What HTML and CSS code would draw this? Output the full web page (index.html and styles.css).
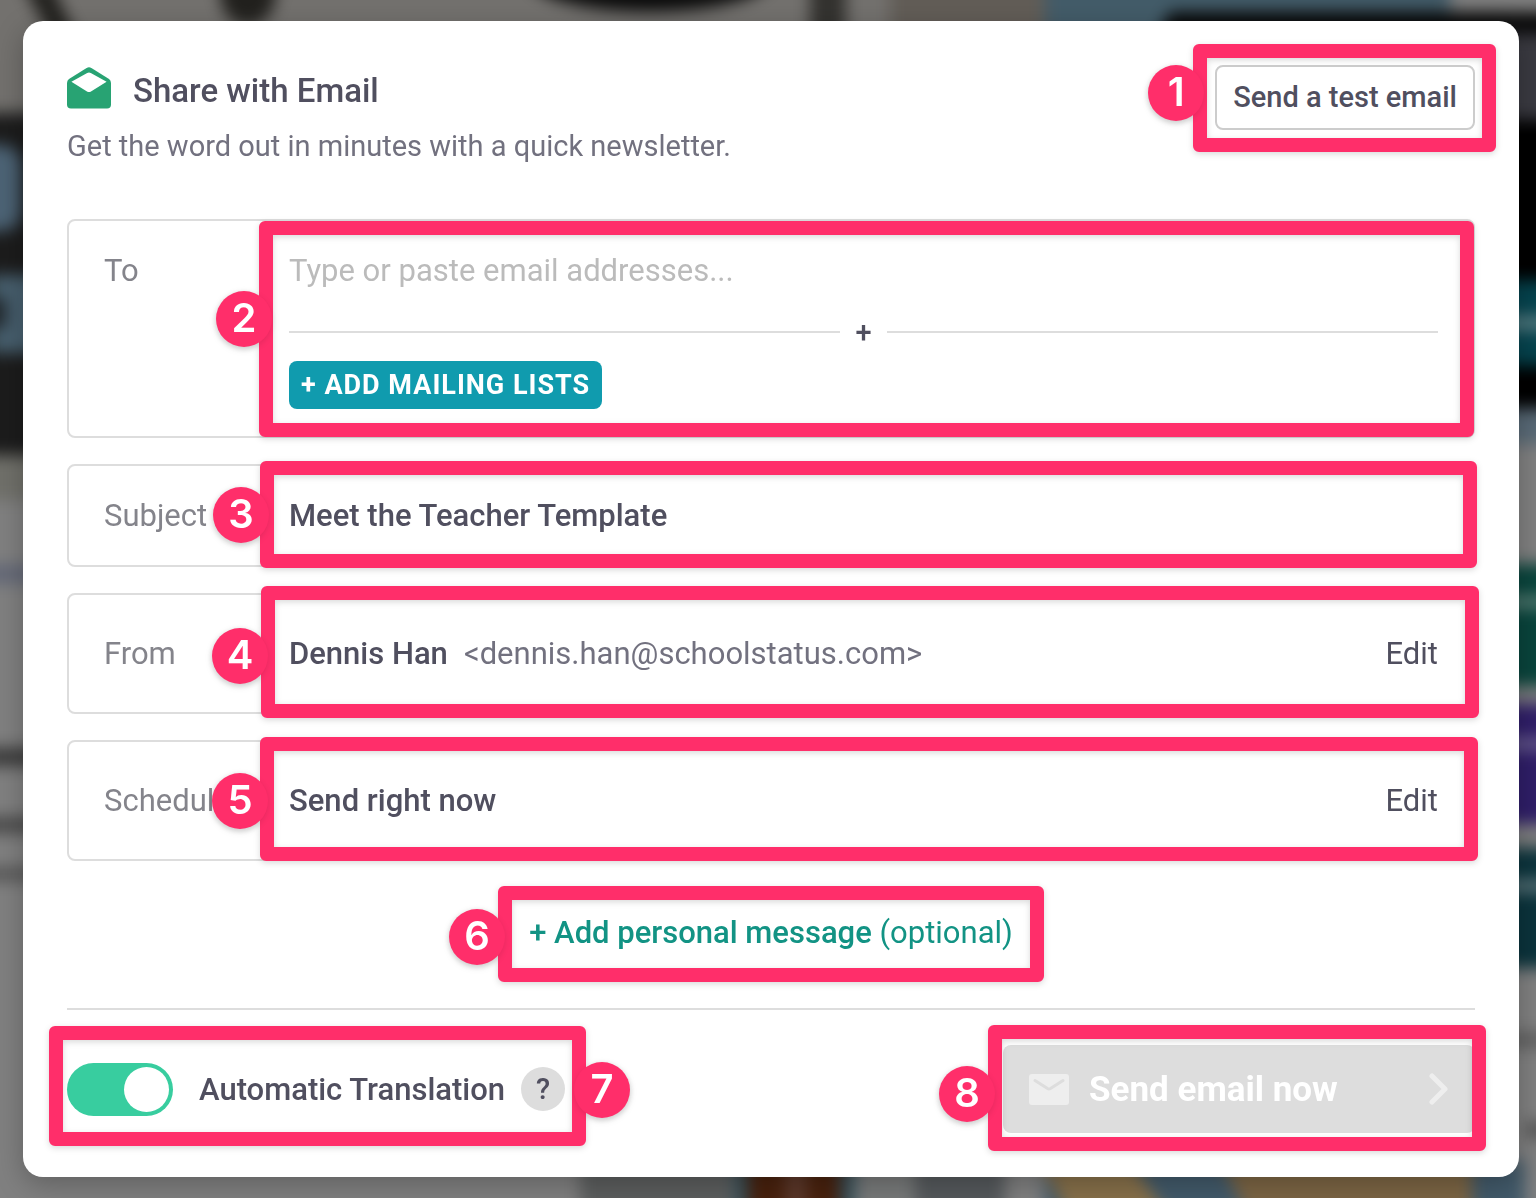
FILE: index.html
```html
<!DOCTYPE html>
<html lang="en">
<head>
    <meta charset="UTF-8">
    <meta name="viewport" content="width=device-width, initial-scale=1.0">
    <title>Share with Email</title>
    <link rel="stylesheet" href="styles.css">
</head>
<body>
    <!-- Blurred page behind the dialog -->
    <svg class="backdrop" viewBox="0 0 1536 1198" preserveAspectRatio="none" aria-hidden="true">
        <rect x="-40" y="-40" width="1616" height="1278" fill="#808080"/>
        <rect x="-40" y="-40" width="1085" height="153" fill="#73716e"/>
        <path d="M15 -30 L45 -30 L80 45 L55 45 Z" fill="#22211e"/>
        <ellipse cx="248" cy="-6" rx="28" ry="32" fill="#22211e"/>
        <ellipse cx="650" cy="-22" rx="120" ry="34" fill="#0c0c0c"/>
        <rect x="810" y="-40" width="36" height="80" fill="#33322f"/>
        <rect x="890" y="-40" width="155" height="80" fill="#625d57"/>
        <rect x="1045" y="-60" width="405" height="100" fill="#435c69"/>
        <path d="M1170 12 H1576 V40 H1155 Z" fill="#080808"/>
        <rect x="-40" y="113" width="100" height="342" fill="#1c1c1c"/>
        <rect x="-40" y="145" width="62" height="86" rx="20" fill="#4c6375"/>
        <rect x="-10" y="275" width="60" height="78" fill="#48606f"/>
        <rect x="-40" y="298" width="46" height="30" fill="#20262b"/>
        <rect x="-40" y="455" width="100" height="45" fill="#70706a"/>
        <rect x="-40" y="565" width="80" height="18" fill="#626777"/>
        <rect x="-40" y="748" width="80" height="18" fill="#383838"/>
        <rect x="-40" y="817" width="80" height="16" fill="#484848"/>
        <rect x="-40" y="868" width="80" height="12" fill="#505050"/>
        <rect x="1500" y="34" width="80" height="86" fill="#3a3a41"/>
        <rect x="1500" y="120" width="80" height="290" fill="#000000"/>
        <rect x="1500" y="280" width="80" height="86" fill="#05434e"/>
        <rect x="1500" y="316" width="80" height="14" fill="#5c8085"/>
        <rect x="1500" y="408" width="80" height="36" fill="#586976"/>
        <rect x="1500" y="564" width="80" height="122" fill="#09443c"/>
        <rect x="1500" y="596" width="80" height="12" fill="#5d8077"/>
        <rect x="1500" y="704" width="80" height="120" fill="#2f1e68"/>
        <rect x="1500" y="738" width="80" height="12" fill="#6d6290"/>
        <rect x="1500" y="848" width="80" height="120" fill="#0b333c"/>
        <rect x="1500" y="880" width="80" height="12" fill="#627a7f"/>
        <rect x="1500" y="1032" width="80" height="16" fill="#606060"/>
        <rect x="1525" y="1122" width="50" height="16" fill="#555555"/>
        <rect x="580" y="1160" width="425" height="80" fill="#5c5e5e"/>
        <rect x="735" y="1160" width="120" height="80" fill="#35505a"/>
        <rect x="748" y="1160" width="92" height="80" fill="#48210d"/>
        <rect x="785" y="1160" width="22" height="80" fill="#5c392c"/>
        <rect x="855" y="1160" width="60" height="80" fill="#787a7a"/>
        <rect x="915" y="1160" width="90" height="80" fill="#55595c"/>
        <rect x="1045" y="1160" width="480" height="80" fill="#425a6a"/>
        <path d="M1040 1160 H1130 L1185 1240 H1080 Z" fill="#87704a"/>
        <path d="M1220 1160 H1472 V1240 H1260 Z" fill="#7c6544"/>
    </svg>

    <main class="modal">
        <header class="modal-header">
            <div>
                <h1 class="title">
                    <svg class="title-icon" viewBox="0 0 44 42" aria-hidden="true">
                        <path fill="#28a373" d="M19.6 1 Q22 -.4 24.4 1 L42 12 Q44 13.4 44 16 V37.5 Q44 41.5 40 41.5 H4 Q0 41.5 0 37.5 V16 Q0 13.4 2 12 Z"/>
                        <path fill="#ffffff" d="M20.2 6 Q22 4.8 23.8 6 L39.6 14.8 L24 24.4 Q22 25.6 20 24.4 L4.4 14.8 Z"/>
                    </svg>
                    Share with Email
                </h1>
                <p class="subtitle">Get the word out in minutes with a quick newsletter.</p>
            </div>
            <div class="anchor">
                <button type="button" class="test-button">Send a test email</button>
                <div class="callout callout-test"><span class="badge">1</span></div>
            </div>
        </header>

        <form class="share-form">
            <div class="field anchor">
                <label class="field-label" for="to">To</label>
                <div class="field-body">
                    <input type="text" id="to" class="text-input" placeholder="Type or paste email addresses...">
                    <div class="separator">+</div>
                    <button type="button" class="lists-button">+ ADD MAILING LISTS</button>
                </div>
                <div class="callout callout-to"><span class="badge">2</span></div>
            </div>

            <div class="field anchor">
                <label class="field-label" for="subject">Subject</label>
                <div class="field-body">
                    <input type="text" id="subject" class="text-input text-strong" value="Meet the Teacher Template">
                </div>
                <div class="callout callout-subject"><span class="badge">3</span></div>
            </div>

            <div class="field field-tall anchor">
                <span class="field-label">From</span>
                <div class="field-body field-row">
                    <span class="text-strong">Dennis Han</span>
                    <span class="address">&lt;dennis.han@schoolstatus.com&gt;</span>
                    <a href="#" class="edit-link">Edit</a>
                </div>
                <div class="callout callout-from"><span class="badge">4</span></div>
            </div>

            <div class="field field-tall anchor">
                <span class="field-label">Schedule</span>
                <div class="field-body field-row">
                    <span class="text-strong">Send right now</span>
                    <a href="#" class="edit-link">Edit</a>
                </div>
                <div class="callout callout-schedule"><span class="badge">5</span></div>
            </div>

            <div class="message-row anchor">
                <a href="#" class="message-link"><strong>+ Add personal message</strong> (optional)</a>
                <div class="callout callout-message"><span class="badge">6</span></div>
            </div>

            <footer class="modal-footer">
                <div class="translation anchor">
                    <input type="checkbox" id="translation" class="toggle" checked>
                    <label for="translation" class="text-strong">Automatic Translation</label>
                    <button type="button" class="help-button">?</button>
                    <div class="callout callout-translation"><span class="badge">7</span></div>
                </div>
                <div class="send anchor">
                    <button type="submit" class="send-button" disabled>
                        <svg class="mail-icon" viewBox="0 0 40 31" aria-hidden="true">
                            <rect width="40" height="31" rx="3" fill="#eeeeee"/>
                            <path d="M6 6.5 L18.5 14.5 Q20 15.4 21.5 14.5 L34 6.5" fill="none" stroke="#dddddd" stroke-width="3" stroke-linecap="round"/>
                        </svg>
                        Send email now
                        <svg class="chevron-icon" viewBox="0 0 20 32" aria-hidden="true">
                            <path d="M3 3 L16 16 L3 29" fill="none" stroke="#eeeeee" stroke-width="5" stroke-linecap="round" stroke-linejoin="round"/>
                        </svg>
                    </button>
                    <div class="callout callout-send"><span class="badge">8</span></div>
                </div>
            </footer>
        </form>
    </main>
</body>
</html>
```
FILE: styles.css
```css
* {
    box-sizing: border-box;
}

body {
    margin: 0;
    padding: 21px 17px 21px 23px;
    background-color: #808080;
    font-family: Roboto, sans-serif;
    font-size: 31px;
    line-height: 45px;
    color: #504f5f;
}

button,
input {
    font: inherit;
    color: inherit;
}

a {
    color: inherit;
    text-decoration: none;
}

.backdrop {
    position: fixed;
    inset: 0;
    width: 100%;
    height: 100%;
    overflow: visible;
    filter: blur(8px);
}

.modal {
    position: relative;
    padding: 44px;
    background-color: #ffffff;
    border-radius: 20px;
    box-shadow: 0 8px 28px rgba(0, 0, 0, 0.25);
}

.modal-header {
    display: flex;
    justify-content: space-between;
    align-items: flex-start;
    margin-bottom: 50px;
}

.title {
    display: flex;
    align-items: center;
    gap: 22px;
    margin: 0;
    font-size: 33px;
    font-weight: 500;
    line-height: 52px;
}

.title-icon {
    width: 44px;
    height: 42px;
    margin-bottom: 6px;
}

.subtitle {
    margin: 7px 0 0;
    font-size: 29px;
    color: #72717f;
}

.test-button {
    height: 65px;
    padding: 0 16px;
    font-size: 29px;
    font-weight: 500;
    background-color: #ffffff;
    border: 2px solid #cccccc;
    border-radius: 8px;
}

.share-form {
    display: flex;
    flex-direction: column;
    gap: 26px;
}

.anchor {
    position: relative;
}

.field {
    display: flex;
    padding: 27px 35px;
    border: 2px solid #dddddd;
    border-radius: 8px;
}

.field-tall {
    padding: 36px 35px;
}

.field-label {
    flex: 0 0 185px;
    color: #84848b;
}

.field-body {
    flex: 1;
    min-width: 0;
}

.field-row {
    display: flex;
    gap: 16px;
}

.text-input {
    display: block;
    width: 100%;
    height: 45px;
    padding: 0;
    border: none;
    outline: none;
    background: none;
}

.text-input::placeholder {
    color: #bbbbbb;
    opacity: 1;
}

.text-strong {
    font-weight: 500;
}

.address {
    color: #72717f;
}

.edit-link {
    margin-left: auto;
}

.separator {
    display: flex;
    align-items: center;
    gap: 15px;
    margin: 24px 0 14px;
    font-weight: 500;
    font-size: 29px;
    line-height: 30px;
}

.separator::before,
.separator::after {
    content: "";
    flex: 1;
    height: 2px;
    background-color: #dddddd;
}

.lists-button {
    display: block;
    height: 48px;
    padding: 0 12px;
    font-size: 27px;
    font-weight: 700;
    line-height: 46px;
    letter-spacing: 1px;
    color: #ffffff;
    background-color: #109bae;
    border: none;
    border-radius: 8px;
}

.message-row {
    align-self: center;
    margin: 23px 0 27px;
}

.message-link {
    display: block;
    color: #129384;
}

.message-link strong {
    font-weight: 500;
}

.modal-footer {
    display: flex;
    justify-content: space-between;
    padding-top: 35px;
    border-top: 2px solid #dddddd;
}

.translation {
    display: flex;
    align-items: center;
}

.toggle {
    appearance: none;
    display: flex;
    justify-content: flex-end;
    width: 106px;
    height: 53px;
    margin: 0 26px 0 0;
    padding: 4px;
    border-radius: 27px;
    background-color: #38cd9f;
}

.toggle::before {
    content: "";
    width: 45px;
    height: 45px;
    border-radius: 50%;
    background-color: #ffffff;
}

.toggle:not(:checked) {
    justify-content: flex-start;
    background-color: #cccccc;
}

.help-button {
    width: 44px;
    height: 44px;
    margin-left: 16px;
    padding: 0;
    font-size: 29px;
    font-weight: 500;
    line-height: 44px;
    background-color: #dddddd;
    border: none;
    border-radius: 50%;
}

.send {
    flex: 0 1 472px;
}

.send-button {
    display: flex;
    align-items: center;
    gap: 20px;
    width: 100%;
    height: 88px;
    padding: 0 26px;
    font-size: 35px;
    font-weight: 700;
    color: #ffffff;
    background-color: #dddddd;
    border: none;
    border-radius: 8px;
}

.mail-icon {
    width: 40px;
    height: 31px;
}

.chevron-icon {
    width: 20px;
    height: 32px;
    margin-left: auto;
}

/* Numbered callouts */
.callout {
    --badge-x: -63px;
    --badge-y: 0px;
    position: absolute;
    border: 14px solid #ff2e6a;
    border-radius: 6px;
    filter: drop-shadow(0 2px 3px rgba(0, 0, 0, 0.15));
    pointer-events: none;
}

.badge {
    position: absolute;
    top: calc(50% - 28px + var(--badge-y));
    left: var(--badge-x);
    width: 56px;
    height: 56px;
    border-radius: 50%;
    background-color: #ff2e6a;
    box-shadow: 0 2px 6px rgba(0, 0, 0, 0.1);
    font-family: Inter, sans-serif;
    font-size: 40px;
    font-weight: 600;
    line-height: 54px;
    text-align: center;
    color: #ffffff;
}

.callout-test {
    --badge-x: -59px;
    --badge-y: -5px;
    inset: -21px -21px -22px -22px;
}

.callout-to {
    --badge-x: -57px;
    --badge-y: -10px;
    inset: 0 -1px -1px 190px;
}

.callout-subject {
    --badge-x: -61px;
    inset: -5px -4px -3px 191px;
}

.callout-from {
    --badge-y: 4px;
    inset: -9px -6px -6px 192px;
}

.callout-schedule {
    --badge-x: -62px;
    --badge-y: 2px;
    inset: -5px -5px -2px 191px;
}

.callout-message {
    --badge-y: 3px;
    inset: -24px -31px -27px;
}

.callout-translation {
    --badge-x: calc(100% + 2px);
    --badge-y: 4px;
    inset: -19px -21px -13px -18px;
}

.callout-send {
    --badge-y: 6px;
    inset: -20px -11px -18px -15px;
}
```
